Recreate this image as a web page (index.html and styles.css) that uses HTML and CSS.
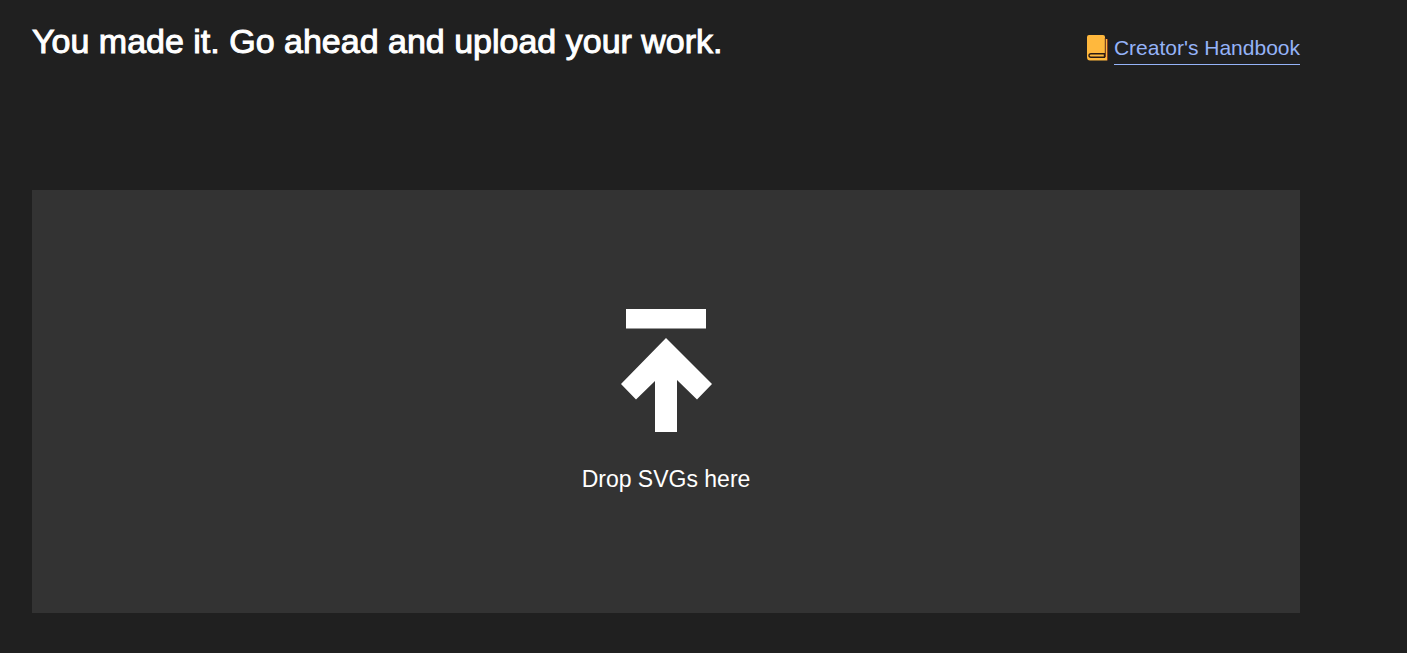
FILE: index.html
```
<!DOCTYPE html>
<html lang="en">
<head>
    <meta charset="UTF-8">
    <meta name="viewport" content="width=device-width, initial-scale=1.0">
    <title>Upload</title>
    <link rel="stylesheet" href="styles.css">
</head>
<body>
    <main class="upload-page">
        <header class="page-header">
            <h1>You made it. Go ahead and upload your work.</h1>
            <div class="handbook">
                <svg class="book-icon" width="22" height="28" viewBox="0 0 22 28" aria-hidden="true">
                    <path d="M3 1H17Q19 1 19 3V5H21V26.500H4Q1 26.500 1 23V3Q1 1 3 1Z" fill="#ffb83d"/>
                    <path d="M18.500 19.800H5Q3 19.800 3 21.600Q3 23.200 5 23.200H18.500Z" fill="#ffb83d" stroke="#2a1a14" stroke-width="1.400"/>
                    <path d="M19.300 4V23" fill="none" stroke="#5a2a18" stroke-width="1"/>
                    <path d="M21.500 5V26.500" fill="none" stroke="#8a3a20"/>
                </svg>
                <a href="#">Creator's Handbook</a>
            </div>
        </header>

        <label class="drop-zone" for="fileInput">
            <svg class="upload-icon" width="92" height="124" viewBox="0 0 92 124" aria-hidden="true">
                <path d="M6 1H86V20.500H6Z" fill="#fff"/>
                <path d="M46 30L92 76L77 91.500L57 72V124H35V73L16 91.500L1 76Z" fill="#fff"/>
            </svg>
            <span>Drop SVGs here</span>
            <input type="file" id="fileInput" class="file-input" accept=".svg" multiple>
        </label>
    </main>
</body>
</html>
```
FILE: styles.css
```
* {
    box-sizing: border-box;
}
body {
    margin: 0;
    background-color: #202020;
    color: #fff;
    font-family: "Liberation Sans", Arial, sans-serif;
}
.upload-page {
    display: flex;
    flex-direction: column;
    min-height: 100vh;
    padding: 22px 107px 40px 32px;
}
.page-header {
    display: flex;
    justify-content: space-between;
    align-items: flex-start;
    margin-bottom: 125px;
}
h1 {
    margin: 0;
    font-size: 34px;
    line-height: 38px;
    font-weight: 400;
    -webkit-text-stroke: 1px #fff;
}
.handbook {
    display: flex;
    align-items: flex-start;
    gap: 6px;
    padding-top: 12px;
    font-size: 21px;
}
.handbook a {
    padding: 2px 0 4px;
    line-height: 24px;
    color: #95b3f8;
    text-decoration: none;
    border-bottom: 1px solid #95b3f8;
}
.drop-zone {
    position: relative;
    flex: 1;
    display: flex;
    flex-direction: column;
    align-items: center;
    justify-content: center;
    gap: 32px;
    padding-bottom: 2px;
    background-color: #333;
    font-size: 23px;
    line-height: 30px;
    cursor: pointer;
}
.file-input {
    position: absolute;
    inset: 0;
    width: 100%;
    height: 100%;
    opacity: 0;
    cursor: pointer;
}
```
